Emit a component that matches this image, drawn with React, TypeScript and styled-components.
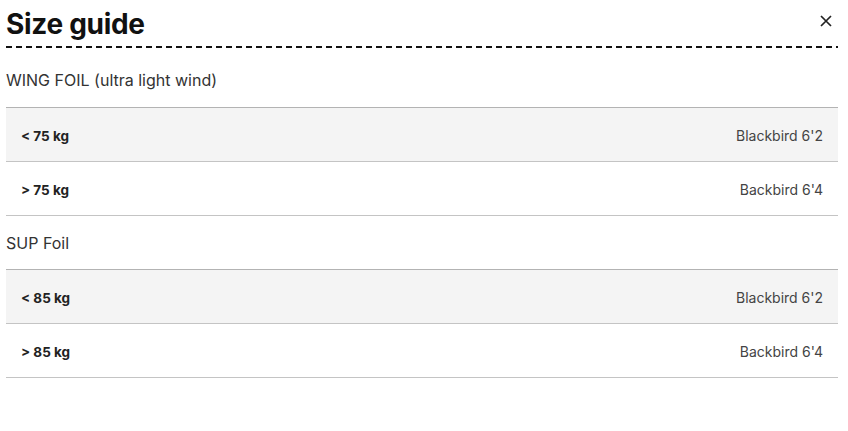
import React from "react";
import styled, { createGlobalStyle } from "styled-components";

const Global = createGlobalStyle`
  html, body { margin: 0; padding: 0; background: #fff; }
  body { font-family: Inter, "Liberation Sans", Arial, sans-serif; color: #222; }
`;

const Panel = styled.div`
  width: 848px;
  box-sizing: border-box;
  padding: 0 10px 0 6px;
`;

const Header = styled.div`
  display: flex;
  align-items: center;
  justify-content: space-between;
  height: 46px;
`;

const Title = styled.h1`
  margin: 0;
  font-size: 28px;
  font-weight: 700;
  letter-spacing: -0.3px;
  color: #111;
  line-height: 1;
  padding-top: 2px;
`;

const Close = styled.button`
  border: 0;
  background: none;
  padding: 0;
  width: 24px;
  height: 24px;
  display: flex;
  align-items: center;
  justify-content: center;
  margin-bottom: 4px;
  cursor: pointer;
`;

const Dashed = styled.div`
  height: 2px;
  background: repeating-linear-gradient(
    to right,
    #111 0 6px,
    transparent 6px 10px
  );
`;

const Section = styled.div<{ $top: number; $bottom: number }>`
  font-size: 16px;
  line-height: 20px;
  color: #333;
  padding: ${(p) => p.$top}px 0 ${(p) => p.$bottom}px;
`;

const Table = styled.div`
  border-top: 1px solid #b3b3b3;
`;

const Row = styled.div<{ $shaded?: boolean }>`
  display: flex;
  align-items: center;
  justify-content: space-between;
  box-sizing: border-box;
  height: 54px;
  padding: 2px 15px 0;
  border-bottom: 1px solid #c4c4c4;
  background: ${(p) => (p.$shaded ? "#f4f4f4" : "#fff")};
`;

const Weight = styled.span`
  font-size: 13.5px;
  font-weight: 700;
  color: #222;
`;

const Board = styled.span`
  font-size: 14px;
  color: #444;
`;

type Item = { w: string; b: string };

const wing: Item[] = [
  { w: "< 75 kg", b: "Blackbird 6'2" },
  { w: "> 75 kg", b: "Backbird 6'4" },
];
const sup: Item[] = [
  { w: "< 85 kg", b: "Blackbird 6'2" },
  { w: "> 85 kg", b: "Backbird 6'4" },
];

const Rows = ({ items }: { items: Item[] }) => (
  <Table>
    {items.map((it, i) => (
      <Row key={i} $shaded={i % 2 === 0}>
        <Weight>{it.w}</Weight>
        <Board>{it.b}</Board>
      </Row>
    ))}
  </Table>
);

export default function App() {
  return (
    <>
      <Global />
      <Panel>
        <Header>
          <Title>Size guide</Title>
          <Close aria-label="Close">
            <svg width="12" height="12" viewBox="0 0 12 12">
              <path d="M1 1 L11 11 M11 1 L1 11" stroke="#222" strokeWidth="1.7" />
            </svg>
          </Close>
        </Header>
        <Dashed />
        <Section $top={22} $bottom={17}>WING FOIL (ultra light wind)</Section>
        <Rows items={wing} />
        <Section $top={17} $bottom={16}>SUP Foil</Section>
        <Rows items={sup} />
      </Panel>
    </>
  );
}
